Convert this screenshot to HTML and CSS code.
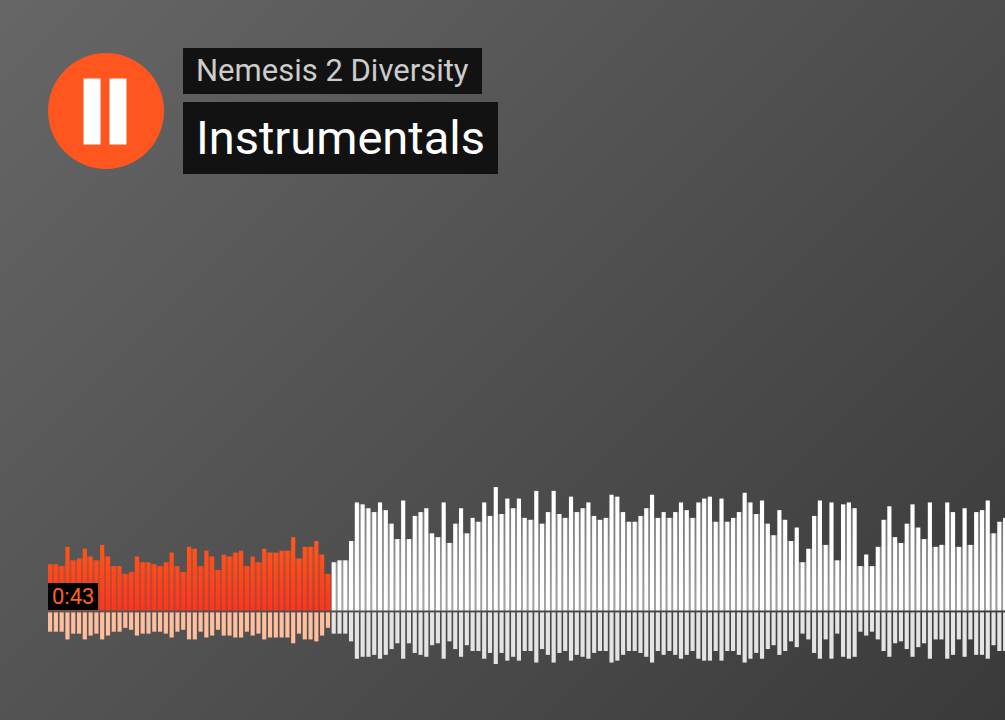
FILE: index.html
```html
<!DOCTYPE html>
<html lang="en">
<head>
  <meta charset="UTF-8">
  <title>Instrumentals</title>
  <meta name="viewport" content="width=device-width, initial-scale=1">
  <link rel="stylesheet" href="styles.css">
</head>
<body>
  <main class="player">
    <header class="track">
      <button class="play-btn" type="button" aria-label="Pause">
        <svg viewBox="0 0 116 116" aria-hidden="true">
          <rect x="35.5" y="25.5" width="17" height="66"/>
          <rect x="61.5" y="25.5" width="17" height="66"/>
        </svg>
      </button>
      <div class="titles">
        <a class="artist" href="#">Nemesis 2 Diversity</a>
        <h1 class="title">Instrumentals</h1>
      </div>
    </header>

    <div class="waveform">
      <svg id="wave" viewBox="0 0 496 92" aria-hidden="true">
        <defs>
          <linearGradient id="playedFill" gradientUnits="userSpaceOnUse" x1="0" y1="26" x2="0" y2="64">
            <stop offset="0" stop-color="#ff5a1c"/>
            <stop offset="1" stop-color="#ff351d"/>
          </linearGradient>
          <linearGradient id="gapFill" gradientUnits="userSpaceOnUse" x1="0" y1="0" x2="0" y2="64">
            <stop offset="0" stop-color="#fff" stop-opacity="0.2"/>
            <stop offset="1" stop-color="#fff" stop-opacity="0.5"/>
          </linearGradient>
        </defs>
      </svg>
      <span class="time">0:43</span>
    </div>
  </main>

  <script src="wave.js"></script>
</body>
</html>
```
FILE: styles.css
```css
* {
  box-sizing: border-box;
}
body {
  margin: 0;
  font-family: Roboto, "Liberation Sans", sans-serif;
  background: linear-gradient(135deg, #666 0%, #3a3a3a 100%);
}
.player {
  display: flex;
  flex-direction: column;
  justify-content: space-between;
  min-height: 100vh;
  padding: 48px 0 56px 48px;
  overflow: hidden;
}
.track {
  display: flex;
  align-items: center;
  gap: 19px;
}
.play-btn {
  flex: none;
  width: 116px;
  height: 116px;
  padding: 0;
  border: none;
  border-radius: 50%;
  background: #ff561f;
  cursor: pointer;
}
.play-btn svg {
  display: block;
  fill: #fff;
}
.titles {
  display: flex;
  flex-direction: column;
  align-items: flex-start;
  gap: 8px;
}
.artist,
.title {
  margin: 0;
  padding: 0 13px;
  background: #121212;
  font-weight: 400;
  white-space: nowrap;
}
.artist {
  font-size: 31px;
  line-height: 46px;
  color: #ccc;
  text-decoration: none;
}
.title {
  font-size: 47px;
  line-height: 72px;
  color: #fff;
}
.waveform {
  position: relative;
}
.waveform svg {
  display: block;
  width: 100%;
}
.played {
  fill: url(#playedFill);
}
.played-gap {
  fill: url(#playedFill);
  opacity: 0.6;
}
.played-low {
  fill: #ffbf9e;
}
.rest {
  fill: #fff;
}
.rest-gap {
  fill: url(#gapFill);
}
.rest-low {
  fill: #e4e4e4;
}
.time {
  position: absolute;
  left: 0;
  bottom: 30.4%;
  padding: 0 4px;
  background: #000;
  color: #ff6122;
  font-size: 22px;
  line-height: 27px;
}
```
FILE: wave.js
```js
const peaks = [
  24, 24, 23, 33, 26, 27, 32, 28, 26, 34, 28, 23, 23, 19, 20, 28, 25, 25, 24, 23,
  25, 30, 23, 20, 33, 32, 23, 31, 28, 21, 29, 28, 30, 31, 23, 28, 25, 32, 30, 30,
  31, 31, 38, 27, 33, 33, 36, 29, 19, 25, 26, 26, 36, 56, 55, 53, 51, 56, 52, 45,
  37, 57, 37, 49, 51, 53, 40, 38, 56, 35, 45, 53, 40, 48, 46, 56, 49, 64, 50, 58,
  53, 58, 48, 47, 62, 45, 51, 62, 50, 48, 59, 51, 53, 56, 49, 47, 48, 60, 59, 51,
  46, 46, 49, 53, 60, 48, 51, 48, 51, 56, 52, 48, 56, 58, 59, 46, 58, 46, 48, 51,
  61, 56, 50, 57, 45, 39, 52, 47, 36, 43, 25, 32, 49, 57, 34, 56, 26, 55, 56, 53,
  23, 29, 23, 33, 47, 54, 38, 35, 45, 55, 43, 37, 56, 33, 34, 56, 51, 33, 53, 34,
  51, 52, 57, 40, 46, 48
];
const playedCount = 49;
const baseline = 64;
const step = 3;
const barWidth = 2.15;
const svg = document.getElementById('wave');

function addBar(x, y, width, height, name) {
  const rect = document.createElementNS('http://www.w3.org/2000/svg', 'rect');
  rect.setAttribute('x', x);
  rect.setAttribute('y', y);
  rect.setAttribute('width', width);
  rect.setAttribute('height', height);
  rect.setAttribute('class', name);
  svg.appendChild(rect);
}

peaks.forEach((peak, i) => {
  const kind = i < playedCount ? 'played' : 'rest';
  const x = i * step;
  addBar(x, baseline - peak, barWidth, peak, kind);
  addBar(x, baseline + 1, barWidth, Math.round(peak * 0.425), kind + '-low');

  // fill between two bars, up to the lower one
  if (i < peaks.length - 1) {
    const gap = Math.min(peak, peaks[i + 1]);
    addBar(x + barWidth, baseline - gap, step - barWidth, gap, kind + '-gap');
  }
});
```
